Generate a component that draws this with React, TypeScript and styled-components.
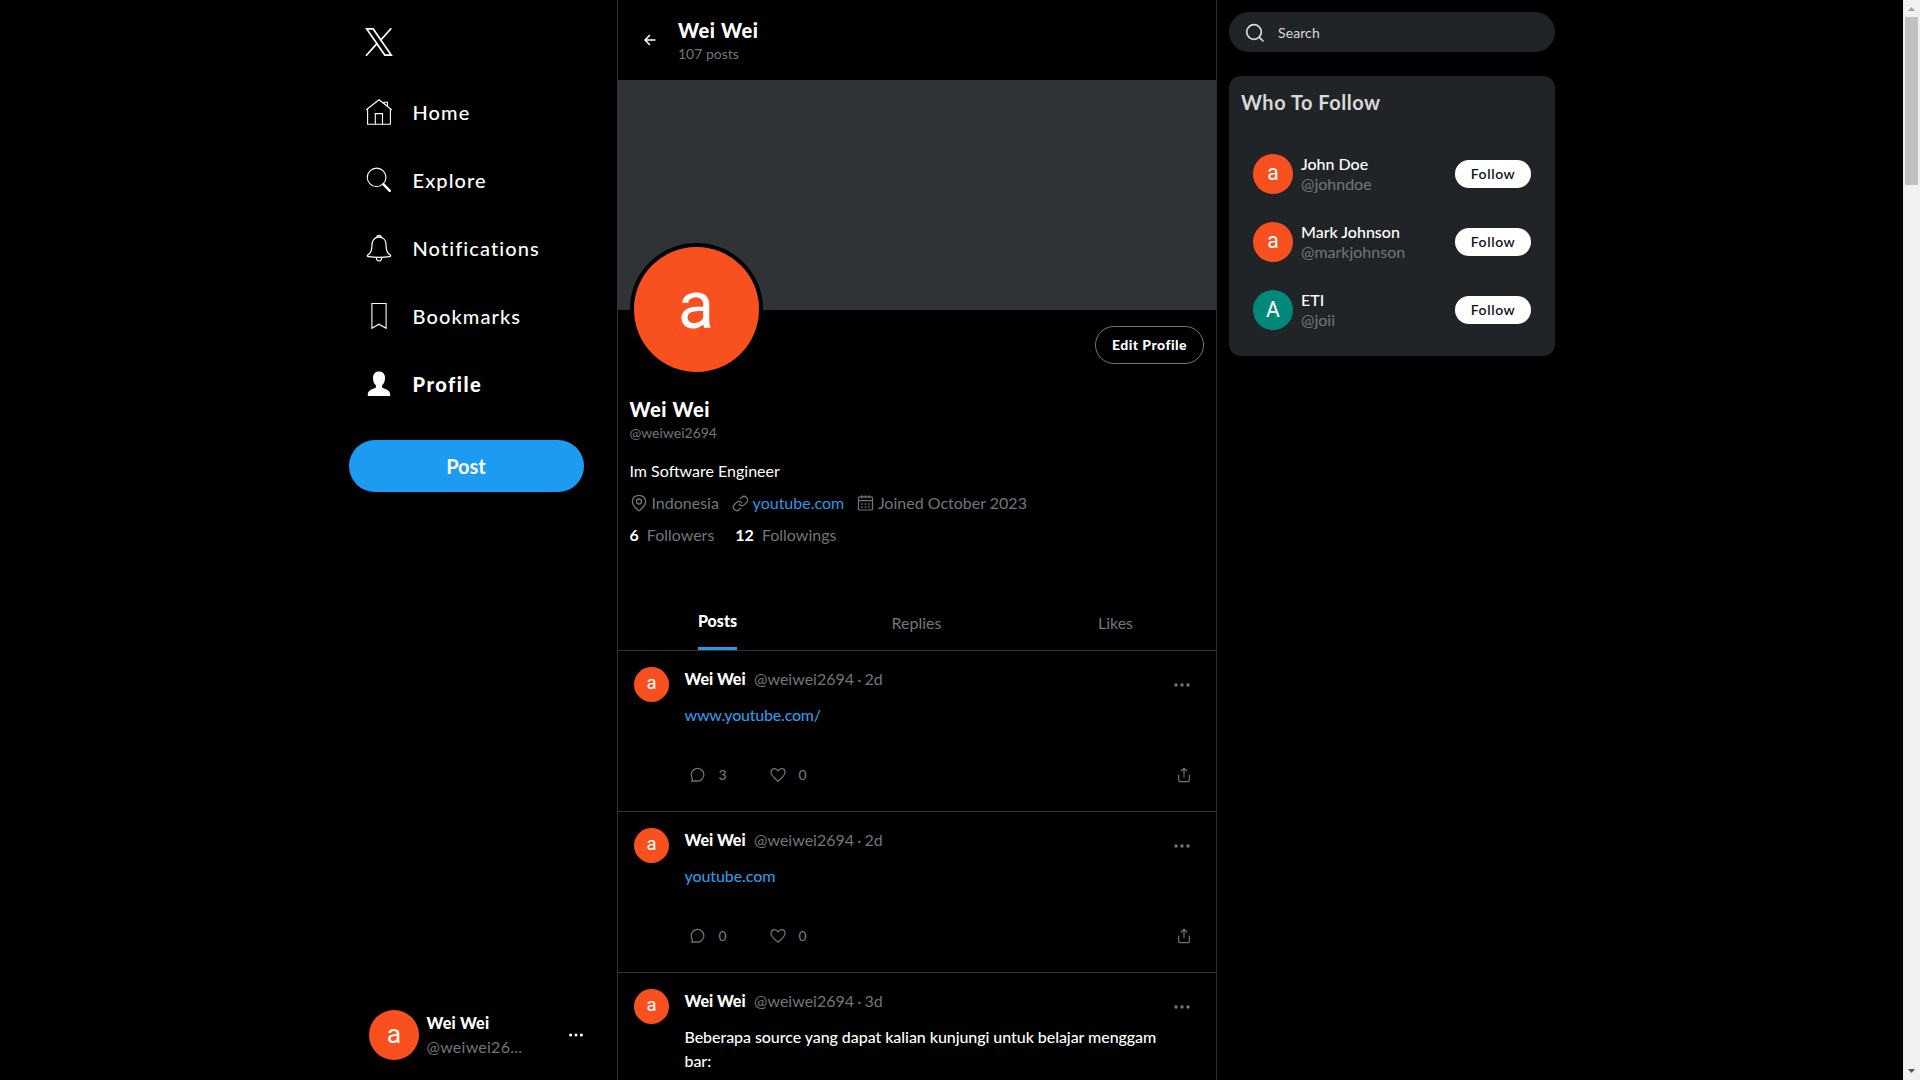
import React from "react";
import styled, { createGlobalStyle } from "styled-components";
import { FiShare, FiLink } from "react-icons/fi";

const GlobalStyle = createGlobalStyle`
  * { box-sizing: border-box; }
  body {
    margin: 0;
    background: #000;
    color: #fff;
    font-family: Lato, "Liberation Sans", sans-serif;
    font-size: 16px;
    line-height: 24px;
    overflow: hidden;
  }
  button { font-family: inherit; cursor: pointer; }
  svg { display: block; flex: none; }
`;

const Page = styled.div`
  display: flex;
  height: 1080px;
  overflow: hidden;
`;
const Layout = styled.div`
  flex: 1;
  display: flex;
  padding-left: 349px;
`;
const Sidebar = styled.aside`
  width: 268px;
  display: flex;
  flex-direction: column;
`;
const LogoBox = styled.div`
  padding: 28px 0 0 16px;
  height: 78px;
`;
const NavItem = styled.a<{ $active?: boolean }>`
  display: flex;
  align-items: center;
  gap: 19.5px;
  height: 68px;
  padding-left: 16px;
  font-size: 20px;
  font-weight: ${(p) => (p.$active ? 900 : 500)};
  letter-spacing: ${(p) => (p.$active ? "1.5px" : "1.1px")};
`;
const PostButton = styled.button`
  width: 235px;
  height: 52px;
  margin-top: 22px;
  padding: 0 1px 1px 0;
  border: 0;
  border-radius: 26px;
  background: #1d9bf0;
  color: #fff;
  font-size: 20px;
  font-weight: 700;
`;
const Account = styled.div`
  display: flex;
  align-items: center;
  gap: 7.5px;
  margin-top: auto;
  padding: 0 32px 20px 20px;
`;
const AccountText = styled.div`
  flex: 1;
  min-width: 0;
  letter-spacing: 0.25px;
`;
const Avatar = styled.div<{ $size: number; $color?: string }>`
  flex: none;
  display: flex;
  align-items: center;
  justify-content: center;
  width: ${(p) => p.$size}px;
  height: ${(p) => p.$size}px;
  padding-bottom: ${(p) => p.$size * (p.$color ? 0.02 : 0.05)}px;
  border-radius: 50%;
  background: ${(p) => p.$color || "#f8511f"};
  color: #fff;
  font-family: Roboto, sans-serif;
  font-size: ${(p) => p.$size * 0.53}px;
  line-height: 1;
`;
const Name = styled.div<{ $weight?: number }>`
  font-weight: ${(p) => p.$weight || 900};
`;
const Muted = styled.span<{ $tight?: boolean }>`
  color: #71767b;
  word-spacing: ${(p) => (p.$tight ? "-1px" : "normal")};
`;

const Main = styled.main`
  width: 600px;
  border: solid #2f3336;
  border-width: 0 1px;
`;
const Header = styled.header`
  display: flex;
  align-items: center;
  gap: 21px;
  height: 80px;
  padding-left: 25px;
`;
const Title = styled.h2`
  margin: 0;
  padding-top: 1px;
  font-size: 20px;
  line-height: 25px;
  font-weight: 900;
  letter-spacing: 0.6px;
`;
const Small = styled.div<{ $top?: number }>`
  margin-top: ${(p) => p.$top || 0}px;
  font-size: 14px;
  line-height: 17px;
  color: #71767b;
`;
const HeaderText = styled.div`
  margin-bottom: 2px;
`;
const Banner = styled.div`
  height: 230px;
  background: #2f3336;
`;
const Profile = styled.section`
  height: 286px;
  padding: 0 12px 0 11.5px;
`;
const ProfileTop = styled.div`
  display: flex;
  justify-content: space-between;
  align-items: flex-start;
  height: 66px;
  margin-bottom: 20px;
`;
const AvatarRing = styled.div`
  margin-top: -67px;
  border: 4px solid #000;
  border-radius: 50%;
`;
const EditButton = styled.button`
  width: 109px;
  height: 38px;
  margin-top: 16px;
  border: 1px solid #71767b;
  border-radius: 19px;
  background: transparent;
  color: #fff;
  font-size: 14px;
  font-weight: 900;
  letter-spacing: 0.45px;
  padding: 0 0 2px;
`;
const Bio = styled.p`
  margin: 18px 0 8px;
`;
const Meta = styled.div`
  display: flex;
  align-items: center;
  gap: 12.7px;
  color: #71767b;
`;
const MetaItem = styled.span`
  display: flex;
  align-items: center;
  gap: 4px;
`;
const Link = styled.a<{ $spacing?: string }>`
  color: #3196e0;
  letter-spacing: ${(p) => p.$spacing || "normal"};
`;
const Stats = styled.div`
  display: flex;
  gap: 21px;
  margin-top: 8px;
`;
const Stat = styled.span`
  display: flex;
  gap: 8px;
`;
const Bold = styled.b`
  font-weight: 700;
`;
const Tabs = styled.nav`
  display: grid;
  grid-template-columns: repeat(3, 1fr);
  height: 55px;
  padding-right: 1px;
  border-bottom: 1px solid #2f3336;
`;
const Tab = styled.a<{ $active?: boolean }>`
  justify-self: center;
  display: flex;
  align-items: center;
  padding-bottom: ${(p) => (p.$active ? 2 : 0)}px;
  color: ${(p) => (p.$active ? "#fff" : "#71767b")};
  font-weight: ${(p) => (p.$active ? 900 : 400)};
  border-bottom: ${(p) => (p.$active ? "3px solid #3196e0" : "0")};
`;
const PostCard = styled.article`
  display: flex;
  gap: 15.5px;
  min-height: 161px;
  padding: 16px;
  border-bottom: 1px solid #2f3336;
`;
const PostBody = styled.div`
  flex: 1;
`;
const PostHead = styled.div`
  display: flex;
  gap: 8.500px;
  height: 24px;
`;
const MoreBox = styled.span`
  margin: 8px 8px 0 auto;
`;
const PostContent = styled.div`
  margin-top: 12px;
  width: 482px;
  font-weight: 500;
  letter-spacing: -0.06px;
`;
const Actions = styled.div`
  display: flex;
  align-items: center;
  height: 20px;
  margin-top: 38px;
  padding: 0 8px 0 5.4px;
  color: #71767b;
  font-size: 14px;
`;
const Action = styled.span`
  display: flex;
  align-items: center;
  gap: 12.5px;
  width: 80px;
  font-weight: 500;
`;
const ShareBox = styled.span`
  margin-left: auto;
`;

const Right = styled.aside`
  width: 326px;
  margin-left: 12px;
  padding-top: 12px;
`;
const Search = styled.div`
  display: flex;
  align-items: center;
  gap: 13px;
  height: 40px;
  padding: 1px 16px 0;
  border-radius: 20px;
  background: #202426;
  color: #d9d9d9;
  font-size: 14px;
  letter-spacing: 0.1px;
`;
const FollowCard = styled.section`
  height: 280px;
  margin-top: 24px;
  padding: 12px;
  border-radius: 12px;
  background: #202426;
`;
const CardTitle = styled.h2`
  margin: 0 0 25px;
  padding-top: 1px;
  font-size: 20px;
  line-height: 26px;
  font-weight: 700;
  letter-spacing: 0.5px;
  color: #d9d9d9;
`;
const Suggestion = styled.div`
  display: flex;
  align-items: center;
  gap: 8px;
  height: 68px;
  padding: 0 12px;
  line-height: 20px;
`;
const FollowButton = styled.button`
  width: 76px;
  height: 28px;
  margin-left: auto;
  border: 0;
  border-radius: 14px;
  background: #fff;
  color: #0f1419;
  font-size: 14px;
  font-weight: 600;
  letter-spacing: 0.6px;
  padding: 0 0 1px;
`;
const Scrollbar = styled.div`
  display: flex;
  flex-direction: column;
  align-items: center;
  width: 17px;
  background: #f1f1f1;
`;
const Thumb = styled.div`
  width: 13px;
  height: 168px;
  margin-bottom: auto;
  background: #c1c1c1;
`;

const stroke = { fill: "none", stroke: "currentColor" };

const XLogo = () => (
  <svg width="28" height="28" viewBox="0 0 28 28" {...stroke} strokeWidth="1.7">
    <path d="M1.7.9h6.5l18 26.2h-6.4z" />
    <path d="M26.3.3 15.4 12.5M1 27.7l11.4-12.6" />
  </svg>
);
const HomeIcon = () => (
  <svg width="28" height="28" viewBox="0 0 28 28" {...stroke} strokeWidth="1.1">
    <path d="M1.3 11.8 14 1.7l12.7 10.1M2.6 10.9v15.4h22.8V10.9M10.3 26.3V15.6h7.2v10.7M19.2 5.6V4.2h3.2v4" />
  </svg>
);
const ExploreIcon = () => (
  <svg width="28" height="28" viewBox="0 0 28 28" {...stroke}>
    <circle cx="11.6" cy="11.4" r="9.3" strokeWidth="1.1" />
    <path d="m18.3 18.1 6.5 6.7" strokeWidth="2.4" strokeLinecap="round" />
  </svg>
);
const BellIcon = () => (
  <svg width="28" height="28" viewBox="0 0 28 28" {...stroke} strokeWidth="1.2" strokeLinejoin="round">
    <path d="M11.8 3.6a2.2 2.2 0 0 1 4.4 0M14 3.1c-4.6 0-7 3.3-7 7.6 0 5.8-1.4 8.7-4.3 10.4-.6.4-.3 1.3.6 1.6 6.3.9 15.1.9 21.4 0 .9-.3 1.2-1.2.6-1.6-2.9-1.7-4.3-4.6-4.3-10.4 0-4.3-2.4-7.6-7-7.6zM11.4 23.4c0 4.7 5.2 4.7 5.2 0" />
  </svg>
);
const BookmarkIcon = () => (
  <svg width="28" height="28" viewBox="0 0 28 28" {...stroke} strokeWidth="1.1">
    <path d="M6.9 1.5h14.2v24.8L14 22.2l-7.1 4.1z" />
  </svg>
);
const ProfileIcon = () => (
  <svg width="28" height="28" viewBox="0 0 28 28" fill="currentColor">
    <path d="M14 1.6c-4 0-6 2.7-6 6.3 0 3.3 1 5.8 2.9 7.3v2.4c-1.6 1.5-8.2 1.7-8.2 7.3 0 .8.4 1.1 1.1 1.1h20.4c.7 0 1.1-.3 1.1-1.1 0-5.6-6.600-5.800-8.200-7.300v-2.400C19 13.700 20 11.200 20 7.900c0-3.600-2-6.300-6-6.300z" />
  </svg>
);
const BackIcon = () => (
  <svg width="14" height="14" viewBox="0 0 14 14" {...stroke} strokeWidth="1.5">
    <path d="M12.5 7h-10M7 2 2 7l5 5" />
  </svg>
);
const Dots = ({ size = 20 }: { size?: number }) => (
  <svg width={size} height={size} viewBox="0 0 20 20" fill="currentColor">
    <circle cx="4" cy="10" r="1.7" />
    <circle cx="10" cy="10" r="1.7" />
    <circle cx="16" cy="10" r="1.7" />
  </svg>
);
const PinIcon = () => (
  <svg width="18" height="18" viewBox="0 0 18 18" {...stroke} strokeWidth="1.3">
    <path d="M9 1.3c-3.8 0-6.6 2.7-6.6 6.2 0 3.8 3.6 6.9 5.6 8.7.6.5 1.4.5 2 0 2-1.8 5.6-4.9 5.6-8.7 0-3.5-2.8-6.2-6.6-6.2z" />
    <circle cx="9" cy="7.5" r="2.5" />
  </svg>
);
const CalendarIcon = () => (
  <svg width="17" height="18" viewBox="0 0 18 18" {...stroke} strokeWidth="1.3">
    <rect x="1.6" y="2.6" width="14.8" height="13.8" rx="1.3" />
    <path d="M1.6 6.6h14.8M5.2.8v3.4M12.8.8v3.4M9 .8v3" />
    <path d="M4.6 10h1.6M8.2 10h1.6M11.8 10h1.6M4.6 13.2h1.6M8.2 13.2h1.6M11.8 13.2h1.6" strokeWidth="1.5" />
  </svg>
);
const CommentIcon = () => (
  <svg width="16" height="16" viewBox="0 0 16 16" {...stroke} strokeWidth="1.2" strokeLinejoin="round">
    <path d="M1.7 14.3c.8-1.3.6-2.3.4-3.4A6.3 6.3 0 1 1 5.2 13.6c-1.1.6-2.3.8-3.5.7z" />
  </svg>
);
const HeartIcon = () => (
  <svg width="16" height="16" viewBox="0 0 16 16" {...stroke} strokeWidth="1.2" strokeLinejoin="round">
    <path d="M8 14.2C4.5 11.5 1 8.7 1 5.3 1 3.2 2.5 1.7 4.5 1.7 6 1.7 7.3 2.5 8 4c.7-1.5 2-2.3 3.5-2.3 2 0 3.5 1.5 3.5 3.6 0 3.4-3.5 6.2-7 8.9z" />
  </svg>
);
const SearchIcon = () => (
  <svg width="20" height="20" viewBox="0 0 20 20" {...stroke} strokeWidth="1.7" strokeLinecap="round">
    <circle cx="9" cy="9" r="7.3" />
    <path d="m14.3 14.3 3.7 3.7" />
  </svg>
);
const ScrollArrow = ({ down = false }: { down?: boolean }) => (
  <svg width="17" height="17" viewBox="0 0 17 17">
    <path d={down ? "M5 6h7L8.5 10z" : "M5 11h7L8.5 7z"} fill={down ? "#505050" : "#a3a3a3"} />
  </svg>
);

const navItems = [
  { label: "Home", icon: <HomeIcon /> },
  { label: "Explore", icon: <ExploreIcon /> },
  { label: "Notifications", icon: <BellIcon /> },
  { label: "Bookmarks", icon: <BookmarkIcon /> },
  { label: "Profile", icon: <ProfileIcon />, active: true },
];
const posts = [
  { age: "2d", link: "www.youtube.com/", spacing: "-0.22px", stats: { comments: 3, likes: 0 } },
  { age: "2d", link: "youtube.com", spacing: "-0.1px", stats: { comments: 0, likes: 0 } },
  { age: "3d", lines: ["Beberapa source yang dapat kalian kunjungi untuk belajar menggam", "bar:"] },
];
const people = [
  { name: "John Doe", handle: "@johndoe", letter: "a" },
  { name: "Mark Johnson", handle: "@markjohnson", letter: "a" },
  { name: "ETI", handle: "@joii", letter: "A", color: "#00897b" },
];

export default function App() {
  return (
    <Page>
      <GlobalStyle />
      <Layout>
        <Sidebar>
          <LogoBox>
            <XLogo />
          </LogoBox>
          {navItems.map((n) => (
            <NavItem key={n.label} $active={n.active}>
              {n.icon}
              {n.label}
            </NavItem>
          ))}
          <PostButton>Post</PostButton>
          <Account>
            <Avatar $size={50}>a</Avatar>
            <AccountText>
              <Name>Wei Wei</Name>
              <Muted>@weiwei26...</Muted>
            </AccountText>
            <Dots size={18} />
          </Account>
        </Sidebar>

        <Main>
          <Header>
            <BackIcon />
            <HeaderText>
              <Title>Wei Wei</Title>
              <Small $top={2}>107 posts</Small>
            </HeaderText>
          </Header>
          <Banner />
          <Profile>
            <ProfileTop>
              <AvatarRing>
                <Avatar $size={125}>a</Avatar>
              </AvatarRing>
              <EditButton>Edit Profile</EditButton>
            </ProfileTop>
            <Title>Wei Wei</Title>
            <Small $top={2}>@weiwei2694</Small>
            <Bio>Im Software Engineer</Bio>
            <Meta>
              <MetaItem>
                <PinIcon />
                Indonesia
              </MetaItem>
              <MetaItem>
                <FiLink size={17} strokeWidth={1.7} />
                <Link>youtube.com</Link>
              </MetaItem>
              <MetaItem>
                <CalendarIcon />
                Joined October 2023
              </MetaItem>
            </Meta>
            <Stats>
              <Stat>
                <Bold>6</Bold>
                <Muted>Followers</Muted>
              </Stat>
              <Stat>
                <Bold>12</Bold>
                <Muted>Followings</Muted>
              </Stat>
            </Stats>
          </Profile>
          <Tabs>
            <Tab $active>Posts</Tab>
            <Tab>Replies</Tab>
            <Tab>Likes</Tab>
          </Tabs>
          {posts.map((p, i) => (
            <PostCard key={i}>
              <Avatar $size={35}>a</Avatar>
              <PostBody>
                <PostHead>
                  <Name>Wei Wei</Name>
                  <Muted $tight>@weiwei2694 · {p.age}</Muted>
                  <MoreBox>
                    <Muted>
                      <Dots />
                    </Muted>
                  </MoreBox>
                </PostHead>
                <PostContent>
                  {p.link && <Link $spacing={p.spacing}>{p.link}</Link>}
                  {p.lines && p.lines.map((l) => <div key={l}>{l}</div>)}
                </PostContent>
                {p.stats && (
                  <Actions>
                    <Action>
                      <CommentIcon />
                      {p.stats.comments}
                    </Action>
                    <Action>
                      <HeartIcon />
                      {p.stats.likes}
                    </Action>
                    <ShareBox>
                      <FiShare size={16} strokeWidth={1.7} />
                    </ShareBox>
                  </Actions>
                )}
              </PostBody>
            </PostCard>
          ))}
        </Main>

        <Right>
          <Search>
            <SearchIcon />
            Search
          </Search>
          <FollowCard>
            <CardTitle>Who To Follow</CardTitle>
            {people.map((p) => (
              <Suggestion key={p.handle}>
                <Avatar $size={40} $color={p.color}>
                  {p.letter}
                </Avatar>
                <div>
                  <Name $weight={500}>{p.name}</Name>
                  <Muted>{p.handle}</Muted>
                </div>
                <FollowButton>Follow</FollowButton>
              </Suggestion>
            ))}
          </FollowCard>
        </Right>
      </Layout>
      <Scrollbar>
        <ScrollArrow />
        <Thumb />
        <ScrollArrow down />
      </Scrollbar>
    </Page>
  );
}
